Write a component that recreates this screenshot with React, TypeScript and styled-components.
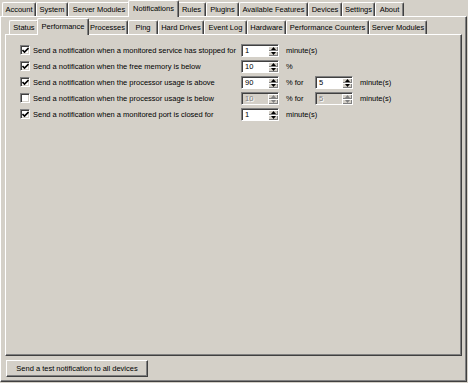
import React from 'react';
import styled, { createGlobalStyle } from 'styled-components';

const GlobalStyle = createGlobalStyle`
  html, body {
    margin: 0;
    padding: 0;
    background: #d4d0c8;
  }
  body {
    font-family: "Liberation Sans", Tahoma, Arial, sans-serif;
    font-size: 7.5px;
    color: #000;
  }
`;

const Window = styled.div`
  width: 468px;
  height: 383px;
  background: #d4d0c8;
  display: flex;
  flex-direction: column;
  box-sizing: border-box;
`;

const TabStrip = styled.div<{ $inset: number; $height: number }>`
  display: flex;
  align-items: flex-end;
  height: ${p => p.$height}px;
  padding-left: ${p => p.$inset}px;
  flex-shrink: 0;
`;

const Tab = styled.div<{ $width: number; $active?: boolean }>`
  position: relative;
  box-sizing: border-box;
  width: ${p => p.$width}px;
  height: ${p => (p.$active ? 17 : 14)}px;
  margin: 0 ${p => (p.$active ? -2 : 0)}px ${p => (p.$active ? -1 : 0)}px;
  z-index: ${p => (p.$active ? 2 : 1)};
  background: #d4d0c8;
  border-top: 1px solid #fff;
  border-left: 1px solid #fff;
  border-right: 1px solid #404040;
  border-radius: 2px 2px 0 0;
  box-shadow: inset -1px 0 #808080;
  display: flex;
  align-items: ${p => (p.$active ? 'flex-start' : 'center')};
  padding-top: ${p => (p.$active ? 3 : 0)}px;
  justify-content: center;
  white-space: nowrap;
  line-height: 10px;
`;

const OuterPanel = styled.div`
  flex: 1;
  width: 467px;
  margin-bottom: 1px;
  box-sizing: border-box;
  border-top: 1px solid #fff;
  border-left: 1px solid #fff;
  border-right: 1px solid #404040;
  border-bottom: 1px solid #404040;
  box-shadow: inset -1px -1px #808080;
  padding: 1px 3px 0 4px;
  display: flex;
  flex-direction: column;
`;

const InnerPanel = styled.div`
  width: 457px;
  height: 322px;
  box-sizing: border-box;
  border-top: 1px solid #fff;
  border-left: 1px solid #fff;
  border-right: 1px solid #404040;
  border-bottom: 1px solid #404040;
  box-shadow: inset -1px -1px #808080;
  padding: 7px 0 0 14px;
  display: flex;
  flex-direction: column;
`;

const Row = styled.div`
  display: flex;
  align-items: center;
  height: 16px;
`;

const CheckBox = styled.div`
  width: 10px;
  height: 10px;
  box-sizing: border-box;
  background: #fff;
  border-top: 1px solid #808080;
  border-left: 1px solid #808080;
  border-right: 1px solid #fff;
  border-bottom: 1px solid #fff;
  box-shadow: inset 1px 1px #404040, inset -1px -1px #d4d0c8;
  display: flex;
  align-items: center;
  justify-content: center;
  flex-shrink: 0;
`;

const Label = styled.span`
  width: 208px;
  margin-left: 3px;
  white-space: nowrap;
`;

const Unit = styled.span<{ $width?: number }>`
  margin-left: 7px;
  width: ${p => (p.$width ? `${p.$width}px` : 'auto')};
  white-space: nowrap;
`;

const Spin = styled.div<{ $disabled?: boolean }>`
  width: 38px;
  height: 13px;
  box-sizing: border-box;
  background: ${p => (p.$disabled ? '#d4d0c8' : '#fff')};
  border-top: 1px solid #808080;
  border-left: 1px solid #808080;
  border-right: 1px solid #fff;
  border-bottom: 1px solid #fff;
  box-shadow: inset 1px 1px #404040;
  display: flex;
  align-items: stretch;
  flex-shrink: 0;
`;

const SpinValue = styled.span<{ $disabled?: boolean }>`
  flex: 1;
  padding: 1px 0 0 3px;
  line-height: 10px;
  color: ${p => (p.$disabled ? '#808080' : '#000')};
  text-shadow: ${p => (p.$disabled ? '1px 1px #fff' : 'none')};
`;

const SpinButtons = styled.div`
  width: 10px;
  display: flex;
  flex-direction: column;
  padding: 1px 0 0 0;
`;

const SpinButton = styled.div`
  flex: 1;
  box-sizing: border-box;
  background: #d4d0c8;
  border-top: 1px solid #fff;
  border-left: 1px solid #fff;
  box-shadow: inset -1px -1px #808080;
  display: flex;
  align-items: center;
  justify-content: center;
`;

const Footer = styled.div`
  padding: 4px 0 0 1px;
`;

const Button = styled.div`
  width: 142px;
  height: 17px;
  box-sizing: border-box;
  border-top: 1px solid #fff;
  border-left: 1px solid #fff;
  border-right: 1px solid #404040;
  border-bottom: 1px solid #404040;
  box-shadow: inset -1px -1px #808080;
  display: flex;
  align-items: center;
  justify-content: center;
  white-space: nowrap;
`;

const Arrow = ({ up, color }: { up?: boolean; color: string }) => (
  <svg width="5" height="3" viewBox="0 0 5 3">
    <path d={up ? 'M2.5 0 L5 3 L0 3 Z' : 'M0 0 L5 0 L2.5 3 Z'} fill={color} />
  </svg>
);

const Spinner = ({ value, disabled }: { value: string; disabled?: boolean }) => {
  const c = disabled ? '#808080' : '#000';
  return (
    <Spin $disabled={disabled}>
      <SpinValue $disabled={disabled}>{value}</SpinValue>
      <SpinButtons>
        <SpinButton><Arrow up color={c} /></SpinButton>
        <SpinButton><Arrow color={c} /></SpinButton>
      </SpinButtons>
    </Spin>
  );
};

const Check = ({ checked }: { checked: boolean }) => (
  <CheckBox>
    {checked && (
      <svg width="7" height="7" viewBox="0 0 7 7">
        <path d="M0.5 3 L2.5 5 L6.5 1" stroke="#000" strokeWidth="1.6" fill="none" />
      </svg>
    )}
  </CheckBox>
);

const topTabs: [string, number, boolean?][] = [
  ['Account', 34],
  ['System', 32],
  ['Server Modules', 62],
  ['Notifications', 51, true],
  ['Rules', 29],
  ['Plugins', 33],
  ['Available Features', 69],
  ['Devices', 34],
  ['Settings', 33],
  ['About', 29],
];

const subTabs: [string, number, boolean?][] = [
  ['Status', 30],
  ['Performance', 52, true],
  ['Processes', 41],
  ['Ping', 30],
  ['Hard Drives', 46],
  ['Event Log', 43],
  ['Hardware', 39],
  ['Performance Counters', 83],
  ['Server Modules', 58],
];

const App: React.FC = () => (
  <>
    <GlobalStyle />
    <Window>
      <TabStrip $inset={2} $height={16}>
        {topTabs.map(([name, w, active]) => (
          <Tab key={name} $width={w} $active={active}>{name}</Tab>
        ))}
      </TabStrip>
      <OuterPanel>
        <TabStrip $inset={4} $height={16}>
          {subTabs.map(([name, w, active]) => (
            <Tab key={name} $width={w} $active={active}>{name}</Tab>
          ))}
        </TabStrip>
        <InnerPanel>
          <Row>
            <Check checked />
            <Label>Send a notification when a monitored service has stopped for</Label>
            <Spinner value="1" />
            <Unit>minute(s)</Unit>
          </Row>
          <Row>
            <Check checked />
            <Label>Send a notification when the free memory is below</Label>
            <Spinner value="10" />
            <Unit>%</Unit>
          </Row>
          <Row>
            <Check checked />
            <Label>Send a notification when the processor usage is above</Label>
            <Spinner value="90" />
            <Unit $width={29}>% for</Unit>
            <Spinner value="5" />
            <Unit>minute(s)</Unit>
          </Row>
          <Row>
            <Check checked={false} />
            <Label>Send a notification when the processor usage is below</Label>
            <Spinner value="10" disabled />
            <Unit $width={29}>% for</Unit>
            <Spinner value="5" disabled />
            <Unit>minute(s)</Unit>
          </Row>
          <Row>
            <Check checked />
            <Label>Send a notification when a monitored port is closed for</Label>
            <Spinner value="1" />
            <Unit>minute(s)</Unit>
          </Row>
        </InnerPanel>
        <Footer>
          <Button>Send a test notification to all devices</Button>
        </Footer>
      </OuterPanel>
    </Window>
  </>
);

export default App;
